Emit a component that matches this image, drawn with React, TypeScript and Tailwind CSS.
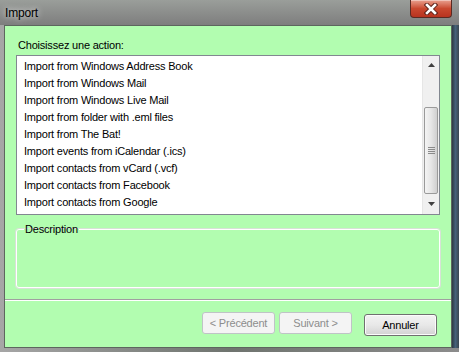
const actions = [
  'Import from Windows Address Book',
  'Import from Windows Mail',
  'Import from Windows Live Mail',
  'Import from folder with .eml files',
  'Import from The Bat!',
  'Import events from iCalendar (.ics)',
  'Import contacts from vCard (.vcf)',
  'Import contacts from Facebook',
  'Import contacts from Google',
];

function CloseButton() {
  return (
    <div className="absolute right-[7px] top-0 flex h-[18px] w-[42px] items-center justify-center rounded-b-[4px] border border-t-0 border-[#5a2a22] bg-gradient-to-b from-[#e8a08f] via-[#c9482f] to-[#b8331f] shadow-[inset_0_1px_0_rgba(255,255,255,0.4)]">
      <svg width="14" height="12" viewBox="0 0 14 12">
        <path d="M3 2 L11 10 M11 2 L3 10" stroke="#5a2018" strokeWidth="4.5" strokeLinecap="square" />
        <path d="M3 2 L11 10 M11 2 L3 10" stroke="#ffffff" strokeWidth="2.6" strokeLinecap="square" />
      </svg>
    </div>
  );
}

function Scrollbar() {
  return (
    <div className="flex w-[17px] flex-col border-l border-[#e6e6e6] bg-[#f0f0f0]">
      <div className="flex h-[17px] items-center justify-center">
        <svg width="7" height="4" viewBox="0 0 7 4">
          <path d="M0 4 L3.5 0 L7 4 Z" fill="#404040" />
        </svg>
      </div>
      <div className="h-[34px]" />
      <div className="mx-[1px] flex h-[87px] items-center justify-center rounded-[2px] border border-[#9a9a9a] bg-gradient-to-r from-[#f4f4f4] via-[#e6e6e6] to-[#cfcfcf]">
        <div className="flex w-[7px] flex-col gap-[1px]">
          <div className="h-[1px] bg-[#8a8a8a]" />
          <div className="h-[1px] bg-[#8a8a8a]" />
          <div className="h-[1px] bg-[#8a8a8a]" />
          <div className="h-[1px] bg-[#8a8a8a]" />
        </div>
      </div>
      <div className="flex flex-1 items-center justify-center">
        <svg width="7" height="4" viewBox="0 0 7 4">
          <path d="M0 0 L7 0 L3.5 4 Z" fill="#404040" />
        </svg>
      </div>
    </div>
  );
}

function Button({ label, disabled }: { label: string; disabled?: boolean }) {
  return (
    <button
      className={
        disabled
          ? 'h-[22px] w-[73px] rounded-[3px] border border-[#bfc4c6] bg-[#f4f4f4] text-[11px] tracking-[-0.2px] text-[#8d8d8d]'
          : 'h-[22px] w-[73px] rounded-[3px] border border-[#707070] bg-gradient-to-b from-[#f3f3f3] via-[#e8e8e8] to-[#d3d3d3] text-[11px] tracking-[-0.2px] text-black shadow-[inset_0_0_0_1px_#fcfcfc]'
      }
    >
      {label}
    </button>
  );
}

export default function App() {
  return (
    <div
      className="relative flex h-[352px] w-[459px] flex-col bg-gradient-to-r from-[#a6a6a6] via-[#6f746f] to-[#8c8c8c]"
      style={{ fontFamily: '"Liberation Sans", Arial, sans-serif' }}
    >
      {/* Title bar */}
      <div className="flex h-[25px] items-center bg-gradient-to-b from-[#9a9e9a] to-[#7e7e7e] pl-[5px]">
        <span className="text-[12px] tracking-[-0.2px] text-black [text-shadow:0_0_6px_#ffffff]">Import</span>
      </div>
      <CloseButton />

      {/* Client area */}
      <div className="flex min-h-0 flex-1 pb-[4px] pl-[4px]">
        <div className="flex flex-1 flex-col border border-[#5d665e] bg-[#b2fdb0]">
          <div className="flex flex-col px-[11px]">
            <div className="pl-[2px] pt-[11px] text-[11px] leading-[17px] tracking-[-0.2px] text-black">
              Choisissez une action:
            </div>
            <div className="mt-[1px] flex h-[160px] border border-[#828790] bg-white">
              <div className="flex flex-1 flex-col pl-[7px] pt-[2px]">
                {actions.map((a) => (
                  <div key={a} className="h-[17px] text-[11px] leading-[17px] tracking-[-0.2px] text-black">
                    {a}
                  </div>
                ))}
              </div>
              <Scrollbar />
            </div>
            <fieldset className="mt-[7px] h-[66px] rounded-[3px] border border-white px-[7px] shadow-[0_0_0_1px_#d7e2d6]">
              <legend className="px-[1px] text-[11px] leading-[14px] tracking-[-0.2px] text-black">Description</legend>
            </fieldset>
          </div>
          <div className="mt-[11px] border-t border-[#a0a0a0] shadow-[0_1px_0_#ffffff]" />
          <div className="flex justify-end gap-[4px] pr-[14px] pt-[12px]">
            <Button label="< Précédent" disabled />
            <Button label="Suivant >" disabled />
            <div className="ml-[8px]">
              <Button label="Annuler" />
            </div>
          </div>
        </div>
        <div className="w-[7px] bg-gradient-to-r from-[#2e3a44] via-[#46627a] to-[#3a4650]" />
      </div>
    </div>
  );
}
